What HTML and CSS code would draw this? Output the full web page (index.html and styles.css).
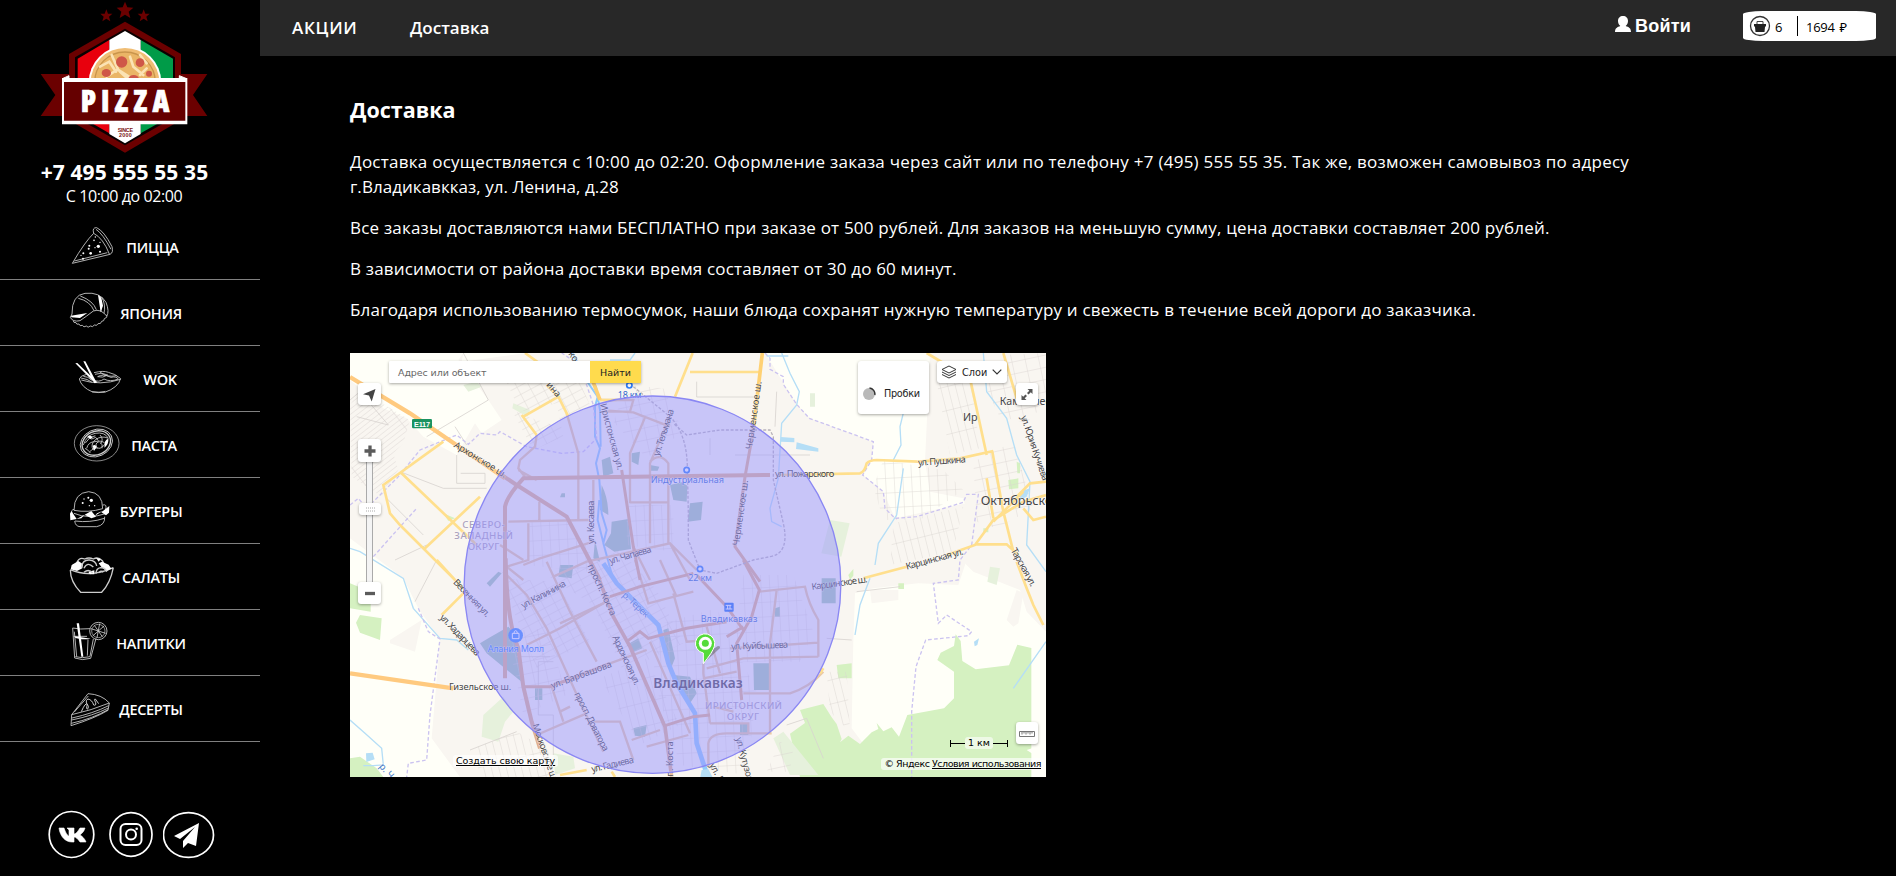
FILE: index.html
```html
<!DOCTYPE html>
<html lang="ru">
<head>
<meta charset="utf-8">
<title>Доставка</title>
<link rel="stylesheet" href="styles.css">
</head>
<body>
<div class="page">
<aside class="sidebar">
  <svg class="logo" viewBox="0 0 780 471">
    <g fill="#6b0000">
      <path d="M375 5l7 17 18 1-14 12 5 19-16-10-16 10 5-19-14-12 18-1z"/>
      <path d="M319 28l5 13 13 0-10 9 4 14-12-8-12 8 4-14-10-9 13 0z"/>
      <path d="M431 28l5 13 13 0-10 9 4 14-12-8-12 8 4-14-10-9 13 0z"/>
      <path d="M122 222H250V348H122L166 285zM622 222H500V348H622L579 285z"/>
      <path d="M375 65L543 162V360L375 458 207 360V162z"/>
    </g>
    <path d="M375 86L525 172V350L375 436 225 350V172z" fill="#0a0000"/>
    <path d="M328 120L233 176V345L328 400z" fill="#e8000d"/>
    <path d="M422 120L519 176V345L422 400z" fill="#009b48"/>
    <path d="M328 120L375 93 422 120V402L375 430 328 402z" fill="#fff"/>
    <circle cx="375" cy="247" r="109" fill="#fff"/>
    <circle cx="375" cy="247" r="103" fill="#f0bd74"/>
    <circle cx="375" cy="247" r="91" fill="#eab566" stroke="#c9954c" stroke-width="4"/>
    <g stroke="#fbe3b4" stroke-width="8" stroke-linecap="round" fill="none"><path d="M300 200l28-15 20 30M335 165l20 45 40 25M390 170l10 30 30 25M320 230l30-20M420 165l20 25M440 205l-20 20M360 215l20 18"/></g>
    <g fill="#cf5748"><circle cx="365" cy="186" r="17"/><circle cx="420" cy="188" r="13"/><ellipse cx="319" cy="219" rx="14" ry="12"/><ellipse cx="401" cy="234" rx="15" ry="9"/><circle cx="447" cy="221" r="9"/></g>
    <path d="M187 236l20-9v9zM560 236l-22-9v9z" fill="#fff" stroke="#fff" stroke-width="3"/>
    <path d="M186 234H562V373H186z" fill="#fff"/><path d="M192 246H556V362H192z" fill="#650000"/>
    <text x="242" y="337" textLength="266" class="logo-name">PIZZA</text>
    <g class="logo-since"><text x="353" y="395" textLength="46">SINCE</text><text x="357" y="412" textLength="38">2000</text></g>
  </svg>
  <div class="phone">+7 495 555 55 35</div>
  <div class="hours">С 10:00 до 02:00</div>
  <nav class="menu">
    <a class="item pizza"><svg class="ico" viewBox="198 -3 153 195"><path d="M217 145Q255 80 281 55Q276 37 290 38Q312 48 336 95Q341 113 330 118L217 145M281 55Q310 70 328 117M223 138L322 113M288 43Q308 56 333 103"/><g class="solid"><circle cx="295" cy="94" r="5"/><circle cx="272" cy="115" r="4"/><circle cx="282" cy="76" r="2.500"/><circle cx="268" cy="92" r="3"/><circle cx="266" cy="101" r="3"/><circle cx="300" cy="82" r="2"/><circle cx="285" cy="98" r="2"/><circle cx="250" cy="115" r="3"/><circle cx="243" cy="121" r="2"/><circle cx="300" cy="110" r="3"/><circle cx="249" cy="131" r="3"/><circle cx="286" cy="66" r="2"/></g></svg><span>ПИЦЦА</span></a>
    <a class="item"><svg class="ico" viewBox="198 195 153 195"><path d="M216 297Q215 240 255 235Q300 230 318 262Q329 290 320 303Q302 280 280 288Q258 305 240 317Q218 322 211 307L216 297M235 250Q270 258 282 287M241 243Q280 258 289 284M296 240Q306 260 303 290M305 246Q318 270 312 295M220 318q0 6 8 5q1 7 9 4q2 8 10 4q4 8 12 2q5 7 12 0q7 5 12-3q8 4 11-4q9 2 11-7q8 0 8-8q10-3 8-10"/><path class="solid" d="M213 302L262 294 240 309 214 307zM294 240l10 8 5 24-7 20z"/></svg><span>ЯПОНИЯ</span></a>
    <a class="item wok"><svg class="ico" viewBox="198 393 153 195"><path d="M238 492Q244 517 278 531L314 532Q355 518 362 490M244 495Q300 513 362 493M276 530Q296 536 316 529M238 492Q240 482 260 478M282 473Q310 466 325 472Q345 476 361 490M285 478q20-8 38 2q-15 10-30 5q15-10 40 2q15-4 22 5q-25 10-43 0q-16 12-34 2M250 484q15 0 25 12M243 489q20 3 32 12M300 472q20 16 50 10"/><path class="solid" d="M226 445l6-1 60 58-7 3zM250 439h6l33 62-6 4z"/></svg><span>WOK</span></a>
    <a class="item pasta"><svg class="ico" viewBox="198 591 153 195"><ellipse cx="290" cy="685" rx="67" ry="53" stroke-width="2"/><ellipse cx="289" cy="684" rx="50" ry="40" transform="rotate(-25 289 684)"/><ellipse cx="289" cy="684" rx="44" ry="35" transform="rotate(-25 289 684)" stroke-width="4"/><path d="M250 690q10-30 35-35q30-5 40 15q-20-10-40 5q-15 15-5 30M260 700q5-20 25-20q20-5 30 5M270 710q10-15 30-10q15-8 20-20M265 668q10 8 20 0M285 665l10 12M292 700q-10-15 5-20M256 684q12-20 30-22M300 660q12 12 2 26M255 700q12 6 16 14M306 700q4-12-6-18"/><path class="solid" d="M315 680q5-10 10-8q2 15-12 26zM262 665q8-8 16 2l-6 5zM278 692q8-6 12 4l-8 12z"/></svg><span>ПАСТА</span></a>
    <a class="item"><svg class="ico" viewBox="198 9 153 195"><path d="M222 106Q222 53 266 50Q308 53 308 101Q264 114 222 106M222 103Q212 105 216 114M308 90q15-4 8 15M222 115Q265 134 320 115M225 138Q270 144 313 130M224 138Q226 154 240 155H290Q316 150 314 125"/><path class="solid" d="M214 108l16 24-19 4-1-20zM254 119l20-11 14 17-14 5zM304 112l24-19-1 20-9 8zM230 132l24-13-10 11zM285 122l24-15-18 8z"/><g class="solid"><circle cx="274" cy="76" r="5"/><circle cx="265" cy="68" r="3"/><circle cx="252" cy="72" r="2"/><circle cx="248" cy="84" r="3"/><circle cx="284" cy="92" r="2"/><circle cx="268" cy="92" r="2"/></g></svg><span>БУРГЕРЫ</span></a>
    <a class="item"><svg class="ico" viewBox="198 207 153 195"><path stroke-width="4" d="M211 285Q211 320 242 352H305Q331 325 340 278M211 284Q270 310 340 278M230 263q8-18 24-11q13-6 26 0q14-8 27 5l4 8"/><path class="solid" d="M212 283l3-13 20-12 14 10-2 12-16 8zM296 265l10-5 20 9 8 12-14 7-14-10zM265 290l18-4v12h-14zM288 248l14 5-6 7z"/><path stroke-width="4" d="M244 278q3-24 24-23q20 2 22 18M252 280q10-22 28-4M288 296q0-16 14-18q14 0 18 12M252 292q14-12 26 2M296 294q6-10 14-2"/></svg><span>САЛАТЫ</span></a>
    <a class="item"><svg class="ico" viewBox="198 405 153 195"><path d="M218 459L224 549Q247 558 272 550L288 490M218 459Q240 464 270 461M223 470L230 545M221 484h40M264 494l-2 48M280 492l-10 52M226 545q20 6 44 0"/><circle cx="295" cy="468" r="26"/><circle cx="295" cy="468" r="20" stroke-width="2"/><path d="M273 461l44 14M299 446l-8 42M278 483l34-30M283 451l24 34"/><path class="solid" d="M230 445h7l13 100h-6zM224 484q25 4 48 7-22 4-46-2z"/></svg><span>НАПИТКИ</span></a>
    <a class="item"><svg class="ico" viewBox="198 603 153 195"><path d="M215 719L264 656Q305 658 328 684Q275 706 215 719L213 752Q284 730 324 706L328 684M216 729Q280 715 326 692M215 735Q280 722 325 699M214 745Q280 730 324 704M223 711L265 663"/><path stroke-width="3" d="M244 710q12-28 18-23q-5 20 2 14q5-6-5-17q-2-10 5-12q12 2 17 18q8 3 6-7q-6-12-1-11l10 14"/></svg><span>ДЕСЕРТЫ</span></a>
  </nav>
  <div class="social">
    <svg width="48" height="49" viewBox="0 0 48 49"><ellipse cx="23.500" cy="24.500" rx="22.300" ry="23" class="ring"/><path fill="#fff" d="M11 18h5c2 6 4 8 5 8v-6l-2-2h7v6c2 0 4-3 6-6h5c-1 4-4 6-5 7 2 1 5 4 6 7h-6c-2-3-4-5-6-5v5h-2c-7 0-12-6-13-14z" stroke="#fff" stroke-width=".6"/></svg>
    <svg width="46" height="47" viewBox="0 0 46 47"><ellipse cx="23" cy="23.500" rx="21" ry="21.800" class="ring"/><rect x="12.500" y="13" width="21" height="21" rx="5" class="thick"/><circle cx="23" cy="23.500" r="5" class="thick"/><circle cx="28.700" cy="17.800" r="1.300" fill="#fff"/></svg>
    <svg width="52" height="48" viewBox="0 0 52 48"><ellipse cx="25.500" cy="24" rx="25" ry="22.300" class="ring"/><path fill="#fff" d="M36 12L11 25l6 3 15-12-12 14v7l5-5 8 3z"/></svg>
  </div>
</aside>
<div class="main">
  <header class="top">
    <a class="nav-a">АКЦИИ</a><a class="nav-b">Доставка</a>
    <a class="login"><svg width="16" height="16" viewBox="0 0 16 16"><path fill="#fff" d="M8 0c3 0 5 2 5 5 0 2-1 4-2.300 5 3 1 5.300 2 5.300 6H0c0-4 2.500-5 5.300-6C4 9 3 7 3 5c0-3 2-5 5-5z"/></svg><span>Войти</span></a>
    <div class="cart"><svg width="22" height="22" viewBox="0 0 22 22"><circle cx="11" cy="11" r="9.500" fill="#fff" stroke="#333" stroke-width="1.300"/><path d="M8 9V6.500h6V9" fill="none" stroke="#444"/><path d="M5 9h12v2l-1 1-.5 5h-9L6 12l-1-1z" fill="#222"/></svg><span class="count">6</span><span class="sum">1694 ₽</span></div>
  </header>
  <main class="content">
    <h1>Доставка</h1>
    <p class="p1">Доставка осуществляется с 10:00 до 02:20. Оформление заказа через сайт или по телефону +7 (495) 555 55 35. Так же, возможен самовывоз по адресу<br><span class="p1b">г.Владикавкказ, ул. Ленина, д.28</span></p>
    <p class="p2">Все заказы доставляются нами БЕСПЛАТНО при заказе от 500 рублей. Для заказов на меньшую сумму, цена доставки составляет 200 рублей.</p>
    <p class="p3">В зависимости от района доставки время составляет от 30 до 60 минут.</p>
    <p class="p4">Благодаря использованию термосумок, наши блюда сохранят нужную температуру и свежесть в течение всей дороги до заказчика.</p>
    <div class="map">
      <svg class="tiles" width="696" height="424" viewBox="30 24 2088 1272">
        <defs>
          <pattern id="g1" width="34" height="24" patternUnits="userSpaceOnUse" patternTransform="rotate(-28)"><path d="M0 0H34M0 0V24" class="lane"/></pattern>
          <pattern id="g2" width="22" height="70" patternUnits="userSpaceOnUse" patternTransform="rotate(-14)"><path d="M0 0H22M0 0V70" class="lane"/></pattern>
          <pattern id="g3" width="26" height="44" patternUnits="userSpaceOnUse" patternTransform="rotate(-3)"><path d="M0 0H26M0 0V44" class="lane"/></pattern>
          <pattern id="g4" width="200" height="13" patternUnits="userSpaceOnUse" patternTransform="rotate(-38)"><path d="M0 0H200M0 0V13" class="lane"/></pattern>
          <pattern id="g5" width="40" height="36" patternUnits="userSpaceOnUse" patternTransform="rotate(-12)"><path d="M0 0H40M0 0V36" class="lane"/></pattern>
        </defs>
        <rect x="30" y="24" width="2088" height="1272" fill="#fffff8"/>
        <path fill="#f9f6f1" d="M30 105L130 190 200 220 250 275 350 330 445 165 355 45 370 24H1275L1370 178 1410 220 1600 290 1595 345 1570 390 1630 440 1665 520 1900 470 1895 600 1855 720 1735 715 1600 730 1545 745 1540 885 1535 1150 1580 1210 1400 1296H360L275 1180 300 885 235 790 190 700 30 580z"/>
        <path fill="#f9f6f1" d="M1770 24H2118V860L2060 800 2040 735 1900 680 1870 650 1895 560 1870 460 1770 440 1755 350z"/>
        <path fill="#f9f6f1" d="M150 885l95-60-20 95-75-25zM1590 735h85v30l-80 10zM2030 735l20 10-15 90-15 10-20-20z"/>
        <path fill="#fffff8" d="M365 50L560 24H370zM390 150l55 15 40 60-60 40-20-30z"/>
        <g fill="#d5f1c1"><path d="M30 715l62 25v60l-62-10zM60 810l65 10-5 65-60-22-12-30zM30 1240l30-5 50 35 20 26H30z"/><path d="M1380 1095l70-18 25 40 15 20 15 45-5 10 25-20 35 25 35-35 20-10-5-18 20 25 25-12 22 28 25-65 110-20 30-30V980l-50-35 10-22 40-20 5-35 15 20 5 60 40 25 100-12 25-62 42 10V1296H1380l-30-130 45-32z"/><path d="M1490 960l45-5v45l-40 0zM1675 715h17v17h-17zM2005 405l30-5v30l-28 3zM1930 550h15v12h-15zM310 505l35 15-20 8zM2030 350l10 5v30l-8 0zM1525 690l15-18v20l-10 12z"/></g>
        <path fill="#fffff8" d="M2060 1215l30-10 28-25v55l-35-5z"/>
        <path fill="#e6f1dc" d="M1470 525l59 10-25 100-60-10zM430 1110l60-55 30 45-25 30-20 60-50-15zM1300 1180l30-20 105 130H1350zM640 1225l60 10 5 35-60 20zM1950 665l30 5-10 50-28-10zM520 175l50 20-8 20-45-25zM370 120l40-10 15 15-40 15zM1410 145h15v40h-15z"/>
        <g fill="#a5c8b6"><path d="M445 880l60-35 20 20 25 150-110-90-20-30zM660 660h40l-5 40-40-5zM440 715l35-35 10 5-35 40zM860 900l35-20 12 30-25 10zM880 1150l40-10-5 35-30-3zM1240 955l50-0v80h-48zM1445 700h42v75h-42zM1305 790l15-5v30h-15zM1200 1135h25v35h-25zM585 1030h22v35h-22z"/></g>
        <g fill="#a5c8b6" transform="translate(390 105)"><path d="M395 240l25-10 10 50-30 10zM395 315q20 40 20 90l-25-15zM485 220l25-5-5 40-20-10zM540 255l28 5-5 12h-25zM600 315l35-8 17 10-2 48-40-5zM660 370l38-5-5 55-40 5zM425 425l50-8 8 90-50 8-30-20 20-35zM375 480l15 65-20-10zM275 340h10v12h-15z"/></g>
        <g fill="#a5c8b6" transform="translate(660 645)"><path d="M310 210l15-5 20 90-12 30-15-40zM340 345l50 5 20 50-20 30-45-60zM220 320"/></g>
        <path d="M345 245L380 300M370 24L445 165 260 275M30 165L60 140 145 240 50 215" class="lane"/>
        <path fill="url(#g4)" d="M30 180l30-45 150 90-20 70-30 30 15 50-50 80-90-60z"/>
        <path fill="url(#g1)" d="M485 80L700 65 750 180 640 240 545 210zM520 205l60 110 90-40-20-100zM620 690l110-20 110-55 110 120 80 160-180 85-90-200zM490 700l160 10 100 180-160 80-80-200z"/>
        <path fill="url(#g3)" d="M570 530l120 0 60 90-10 60-180-20zM860 480l140 0 0 140-140-20zM1210 690h150l60 170-40 90h-240l50-110zM950 840l180-50 120 250-30 250-200-30-80-260zM1630 345l180 30 60 60-130 90-110 0-30-100z"/>
        <path fill="url(#g2)" d="M1660 535l210-50-30 135-190 40zM780 1000l140-60 100 200-120 60zM1790 110l100-20 30 220-90 20zM1460 980l60 0 10 180-60-60zM400 1210l130-50 90 50 40 86H420z"/>
        <path fill="url(#g5)" d="M1900 350l120-60 60 200-110 60-60-20zM1930 110l60-80 128-6v150l-60 60-80-20zM500 860l120-10 60 200-130 60zM860 120l110 10 60 130-110 80-100-110zM1320 1190l40 20-10 70-70 0z"/>
        <path d="M350 330V415H435V385H362M225 770L290 645M180 380L310 430H440M140 460L250 570M165 645L260 600M1070 110V156H1250M1185 330H1410M1310 140L1305 245M1110 280V330M1550 740L1680 725M1535 885L1460 880M390 1215L530 1160M1340 1140L1400 1120 1450 1240M640 1230V1110H595V950H640M530 935H630" class="lane"/>
        <g fill="none" stroke="#b5def6"><path d="M1325 24L1350 85 1378 140 1370 180 1325 235 1315 400 1290 490 1295 530 1325 545M1696 107V180L1680 245 1683 300 1660 345M1690 370L1670 510 1615 595 1605 660M1590 700L1560 780 1545 870M30 610L60 620 190 700 220 790 300 880 350 885 385 915M30 1125L75 1165 125 1210 130 1260 100 1262H70M1930 24L1940 140 2000 220 2030 330 2070 410 2060 600 2118 680M2118 890L2020 1030M810 45H870L885 24M1280 33H1345" stroke-width="4"/></g>
        <g fill="none" stroke="#8fc9fb"><path stroke-width="6" transform="translate(390 105)" d="M305-85L355 10 383 50 375 80V170L390 205 378 250 388 300 395 400 410 450 400 490 430 600M345-20L378 20 390 90 392 200M388 360l-5 60 20 80"/><path stroke-width="14" transform="translate(660 645)" d="M130 10L170 70 240 140 295 195 325 310 350 370 405 460 410 550 440 640"/></g>
        <path fill="#b5def6" d="M1323 276l40 3v13l-40-2zM1370 292l65 18v10l-67-8zM78 1225l20-2 6 20-25 8zM1902 890l15-10-5 20-8 4zM2040 440l30-10-10 25-20 10zM1085 1275l20-3 15 29h-40z"/>
        <g fill="none" stroke="#cbc3f0" stroke-width="4" stroke-dasharray="11 7"><path d="M30 480L55 460 80 490 175 395 240 315 350 270 385 298 420 265 470 270 480 260 560 305 665 325 730 320 770 280 760 180 720 60 665 24M1275 24L1290 40V73L1330 95V118L1370 178 1408 220 1600 290 1595 345 1568 390 1630 440 1635 490 1665 520 1730 515 1870 472 1880 448H1915L1895 600 1860 645 1855 705 1780 715 1795 835 1820 810 1895 860 1885 872 1757 885 1728 965 1715 1100V1296M100 635L185 540 230 490M235 790L265 860 300 882 270 1110 260 1245 205 1255 200 1296"/></g>
        <g fill="none" stroke="#e9c9a6" stroke-width="7">
          <path d="M490 680L560 750 620 850 720 1070 790 1220M620 650L690 800 770 950M550 645L480 600M550 660L600 640 760 590M560 900L660 850 790 775M590 1170L740 1105M635 1025L670 1130"/>
          <path transform="translate(390 105)" d="M390 60H490L480 95H400M415 92L490 97 600 140M600 110L540 250V490M525 112L480 220V370M540 245Q570 215 595 250V490M480 367H595M290 100L325 220V420M200 165L195 200 150 240 145 265 165 290M115 425L355 420M208 365V420M175 430V540L110 560M370 300V410M250 590L350 545 600 490 680 570M490 500L540 600M600 490L660 600M145 270L200 300M110 560L160 600"/>
          <path transform="translate(660 645)" d="M0 190L130 130 150 110M225 0L265 130 400 95M340 100L380 245 450 240M150 310L260 270M650 90L630 250V520M598 95L735 80Q745 130 775 180V290M510 265L775 248M440 325L550 295 775 290M430 310V340L445 450 450 490M440 200L480 340M550 400H690Q750 380 790 335M450 490H565V520M445 620V550Q450 520 500 520H635M100 485L180 485 220 600M215 540L300 510M385 525L260 560M270 245L390 520M430 355L530 335M460 440L520 455M0 370L150 310M30 440L0 455M300 0L350 110"/>
        </g>
        <g fill="none" stroke="#e1b08e">
          <path stroke-width="12" d="M495 1000V485Q500 455 550 400L1290 390M470 380L530 420 680 515 780 705M497 640Q500 830 535 910L550 1025 575 1130 600 1210"/>
          <path stroke-width="11" transform="translate(660 645)" d="M118 60L160 170 210 260 315 500 335 650"/>
          <path stroke-width="9" transform="translate(660 645)" d="M150 110L240 80 400 40M410 45L500 140 550 210M550 0L598 90 575 170 530 250 545 420M200 245L240 215 265 235 380 205 500 185M500 230L550 200M315 497L400 470 450 465"/>
          <path stroke-width="9" d="M845 375L880 605 900 705M550 1025H630L810 955M1240 255L1215 395 1185 605 1260 710"/>
        </g>
        <g fill="none" stroke="#ffdf8d" stroke-width="8"><path d="M310 290L130 420 150 505 180 540 380 740M180 380L410 600M255 610L420 455M290 645L345 705M370 745L305 810M550 215L655 155 620 120M545 210L590 270M655 155L685 215M555 24L640 85M780 165H830M1005 155L1058 24M1050 81L1260 81M30 1296M1320 390L1560 385Q1575 380 1580 355Q1590 345 1610 345L1735 350 1860 340 1960 318M1570 700L1700 665M1820 630L1905 600 1960 525 2050 470 2118 450M2050 440L1960 530M2118 410L2070 415 2030 455M2050 490L2080 525 2118 515M1905 598H2000L2035 630M1957 320L1990 500 2020 620M1960 520L1940 400M1760 24L1820 60M1890 100L1940 330M1990 24L2030 160M660 1290L740 1275M2030 650L2060 730 2080 780 2110 840M1440 985L1450 970M815 1280L825 1296"/><path d="M740 60L780 165M1267 24L1240 255" stroke="#ffd173" stroke-width="11"/></g>
        <path d="M30 96L210 205 495 400M30 985L340 1030" fill="none" stroke="#ffca7f" stroke-width="13"/>
        <path transform="translate(390 105)" d="M490 20L600 110Q650 160 652 260L655 400 655 480 690 570 740 580 850 540 900 530Q960 520 940 430L910 300V170L900 150H750L650 165 610 130" fill="none" stroke="#b8b3ba" stroke-width="4" stroke-dasharray="9 5"/>
        <g class="labels">
          <text transform="translate(340 305) rotate(31.500)" textLength="180">Архонское ш.</text>
          <text transform="translate(780 178) rotate(75)" textLength="205">Иристонская ул.</text>
          <text transform="translate(957 335) rotate(-72)" textLength="146">ул. Тельмана</text>
          <text transform="translate(762 597) rotate(-90)" textLength="130">ул. Кесаева</text>
          <text transform="translate(811 657) rotate(-16)" textLength="130">ул. Чапаева</text>
          <text transform="translate(618 120) rotate(50)">ина</text><text transform="translate(684 27) rotate(55)">ко</text>
          <text transform="translate(1236 314) rotate(-82)" textLength="206">Черменское ш.</text>
          <text transform="translate(1197 603) rotate(-82)" textLength="198">Черменское ш.</text>
          <text x="1305" y="397" textLength="178">ул. Пожарского</text>
          <text transform="translate(1735 362) rotate(-4)" textLength="143">ул. Пушкина</text>
          <text x="1869" y="228" class="village">Ир</text>
          <text x="1979" y="180" class="village">Камбилеевское</text>
          <text transform="translate(2042 215) rotate(71)" textLength="205">ул. Юрия Кучиева</text>
          <text x="1922" y="481" class="town">Октябрьское</text>
          <text transform="translate(1700 674) rotate(-15)" textLength="178">Карцинская ул.</text>
          <text transform="translate(2012 616) rotate(61)" textLength="126">Тарская ул.</text>
          <g transform="translate(0 645)">
            <text transform="translate(338 68) rotate(46)" textLength="145">Весенняя ул.</text>
            <text transform="translate(550 146) rotate(-28)" textLength="147">ул. Калинина</text>
            <text transform="translate(298 174) rotate(46)" textLength="160">ул. Хадарцева</text>
            <text x="327" y="391" textLength="187">Гизельское ш.</text>
            <text transform="translate(637 386) rotate(-20)" textLength="192">ул. Барбашова</text>
            <text transform="translate(742 17) rotate(65)" textLength="168">просп. Коста</text>
            <text transform="translate(817 232) rotate(65)" textLength="160">Ардонская ул.</text>
            <text transform="translate(845 107) rotate(43)" textLength="98" fill="#3f79c6">р. Терек</text>
            <text transform="translate(702 402) rotate(63)" textLength="195">просп. Доватора</text>
            <text transform="translate(577 495) rotate(71)" textLength="180">Московское ш.</text>
            <text transform="translate(757 637) rotate(-13)" textLength="129">ул. Гадиева</text>
            <text transform="translate(1000 650) rotate(-90)" textLength="106">п. Коста</text>
            <text transform="translate(116 620) rotate(48)" fill="#3f79c6">р. Ч</text>
          </g>
          <g transform="translate(1050 645)">
            <text transform="translate(124 269) rotate(-2)" textLength="171">ул. Куйбышева</text>
            <text transform="translate(366 90) rotate(-8)" textLength="169">Карцинское ш.</text>
            <text transform="translate(137 535) rotate(75)" textLength="150">ул. Кутузова</text>
            <text transform="translate(58 615) rotate(62)">ул. Бо</text>
          </g>
          <g class="district"><text x="367" y="549" textLength="127">СЕВЕРО-</text><text x="343" y="581" textLength="176">ЗАПАДНЫЙ</text><text x="383" y="614" textLength="95">ОКРУГ</text><text x="1095" y="1092" textLength="231">ИРИСТОНСКИЙ</text><text x="1160" y="1125" textLength="97">ОКРУГ</text></g>
          <g class="metro"><text x="833" y="160" textLength="71">18 км</text><text x="932" y="413" textLength="220">Индустриальная</text><text x="1045" y="707" textLength="71">22 км</text><text x="1082" y="831" textLength="170">Владикавказ</text><text x="443" y="921" textLength="169" fill="#2a7bff">Алания Молл</text></g>
          <text x="940" y="1028" textLength="268" class="city">Владикавказ</text>
        </g>
        <g fill="#fff" stroke="#2e7cf6" stroke-width="5"><circle cx="868" cy="121" r="8"/><circle cx="1040" cy="375" r="8"/><circle cx="1080" cy="672" r="8"/></g>
        <circle cx="527" cy="871" r="22" fill="#3c8bff"/><path d="M517 865h20v16h-20zM522 865q0-8 5-8t5 8" fill="none" stroke="#fff" stroke-width="3"/>
        <rect x="1153" y="773" width="28" height="27" rx="3" fill="#1e6df0"/><path d="M1157 781h17M1157 792h20M1163 781v11M1170 781v11" stroke="#fff" stroke-width="3"/>
        <ellipse cx="937.500" cy="719" rx="565" ry="566" fill="#9793ff" fill-opacity=".5" stroke="#8a87f3" stroke-width="4"/>
        <path d="M1092 953l46-42q6-8-4-8l-24 14z" fill="#555" opacity=".45"/>
        <path d="M1090 956V924A29 29 0 1 1 1123 904Q1118 922 1090 956z" fill="#55db3a" stroke="#fff" stroke-width="3"/><circle cx="1096" cy="895" r="19.500" fill="#fff"/><circle cx="1096" cy="895" r="10.500" fill="#55db3a"/>
        <rect x="216" y="222" width="60" height="28" rx="4" fill="#1a9360"/><text x="222" y="245" class="shield" textLength="48">E117</text>
      </svg>
      <div class="search ctl"><span>Адрес или объект</span><b>Найти</b></div>
      <div class="ctl geo"><svg width="23" height="22" viewBox="0 0 23 22"><path d="M17.500 6L5 11.300l6 1.200 2.700 6z" fill="#444"/></svg></div>
      <div class="rail"></div>
      <div class="ctl plus"><svg width="23" height="23" viewBox="0 0 23 23"><path d="M12 6.500v11M6.500 12h11" stroke="#5b5b5b" stroke-width="3.300"/></svg></div>
      <div class="ctl thumb"><svg width="22" height="12" viewBox="0 0 22 12"><path d="M7 5h9M7 8h9" stroke="#aaa" stroke-dasharray="1 1"/></svg></div>
      <div class="ctl minus"><svg width="23" height="22" viewBox="0 0 23 22"><path d="M7 11.500h10" stroke="#5b5b5b" stroke-width="3.300"/></svg></div>
      <div class="ctl traffic"><svg width="14" height="14" viewBox="0 0 14 14"><circle cx="7" cy="7" r="6" fill="#b9b9b9"/><path d="M7.500 1A6 6 0 0 1 12.800 8" fill="none" stroke="#333" stroke-width="1.500"/></svg><span>Пробки</span></div>
      <div class="ctl layers"><svg width="16" height="14" viewBox="0 0 16 14"><path d="M1 4.500L8 1l7 3.500L8 8zM1 7l7 3.500L15 7M1 9.500L8 13l7-3.500" fill="none" stroke="#333"/></svg><span>Слои</span><svg width="10" height="6" viewBox="0 0 10 6"><path d="M.7.700L5 5 9.300.700" fill="none" stroke="#333" stroke-width="1.200"/></svg></div>
      <div class="ctl full"><svg width="22" height="22" viewBox="0 0 22 22"><path d="M16.500 6v5l-1.700-1.700-2.300 2.200-1.500-1.500 2.300-2.300L11.500 6zM5.500 17v-5l1.700 1.700 2.300-2.200L11 13l-2.300 2.300 1.800 1.700z" fill="#555"/></svg></div>
      <div class="ctl ruler"><svg width="22" height="22" viewBox="0 0 22 22"><path d="M3.500 9.500h15v5h-15zM6 10v2.500M8 10v1.500M10 10v2.500M12 10v1.500M14 10v2.500M16 10v1.500" fill="none" stroke="#777"/></svg></div>
      <div class="scale"><i></i><span>1 км</span><i class="r"></i></div>
      <div class="copy create"><u>Создать свою карту</u></div>
      <div class="copy terms">© Яндекс <u>Условия использования</u></div>
    </div>
  </main>
</div>
</div>
</body>
</html>
```
FILE: styles.css
```css
* { box-sizing: border-box; }
body { margin: 0; background: #000; color: #fff; font-family: "Open Sans", "Noto Sans", sans-serif; }
.page { display: flex; height: 876px; overflow: hidden; }
.sidebar { width: 260px; flex: none; display: flex; flex-direction: column; }
.logo { width: 260px; height: 157px; display: block; flex: none; }
.logo-name { font: 800 88px "Open Sans", sans-serif; font-stretch: condensed; fill: #fff; stroke: #fff; stroke-width: 2px; }
.logo-since { font: 700 16px "Liberation Sans", sans-serif; fill: #7a1010; }
.phone { height: 31px; line-height: 31px; text-align: center; font-weight: 700; font-size: 21px; letter-spacing: .1px; padding-right: 11px; white-space: nowrap; }
.hours { height: 26px; line-height: 17px; text-align: center; font-size: 16px; padding-right: 12px; letter-spacing: -.4px; white-space: nowrap; }
.menu { display: flex; flex-direction: column; flex: none; }
.item { height: 66px; border-bottom: 1px solid #808080; display: flex; padding-left: 66px; }
.item span { width: 68px; display: flex; justify-content: center; line-height: 68px; font-weight: 600; font-size: 14.500px; letter-spacing: -.3px; white-space: nowrap; }
.pizza span { margin-left: 1.500px; }
.wok span { margin-left: 9px; }
.pasta span { margin-left: 3px; }
.ico { width: 51px; height: 65px; overflow: visible; flex: none; fill: none; stroke: #ccc; stroke-width: 2.600; stroke-linejoin: round; }
.ico .solid { fill: #fff; stroke: none; }
.social { display: flex; align-items: center; padding: 68px 0 0 48px; }
.social svg:nth-child(2) { margin-left: 12px; }
.social svg:nth-child(3) { margin-left: 9px; }
.ring { fill: none; stroke: #fff; stroke-width: 1.700; }
.thick { fill: none; stroke: #fff; stroke-width: 2; }
.main { flex: 1; }
.top { height: 56px; background: #282828; display: flex; padding: 0 20px 0 32px; align-items: flex-start; }
.nav-a, .nav-b { font-weight: 600; font-size: 17px; line-height: 55px; white-space: nowrap; }
.nav-a { width: 118px; letter-spacing: .7px; }
.login { margin-left: auto; width: 128px; display: flex; gap: 4px; padding-top: 16px; font: 700 18px/20px "Liberation Sans", sans-serif; letter-spacing: .2px; }
.cart { width: 133px; height: 30px; margin-top: 11px; background: #fff; color: #000; border-radius: 20px / 3px; display: flex; font-size: 13px; line-height: 33px; padding-left: 6px; }
.cart svg { margin-top: 4px; }
.count { width: 22px; margin-left: 4px; }
.sum { border-left: 1px solid #000; height: 20px; margin-top: 5px; padding-left: 8px; line-height: 23px; letter-spacing: -.3px; word-spacing: 2px; white-space: nowrap; }
.content { padding: 38px 0 0 90px; }
h1 { margin: 0; font-size: 21.500px; line-height: 31px; font-weight: 700; height: 55px; }
p { margin: 0 0 16px; font-size: 17px; line-height: 25px; white-space: nowrap; }
.p1 { letter-spacing: .257px; }
.p1b { letter-spacing: .04px; }
.p2 { letter-spacing: .203px; }
.p3 { letter-spacing: .175px; }
.p4 { letter-spacing: .19px; }
.map { position: relative; width: 696px; height: 424px; margin-top: 31px; overflow: hidden; color: #222; }
.tiles { display: block; }
.lane { fill: none; stroke: #d9d4d0; stroke-width: 2.500; }
.labels { font: 28px "Noto Sans", sans-serif; fill: #454545; stroke: #fff; stroke-opacity: .55; stroke-width: 3px; paint-order: stroke; }
.village { font-size: 32px; }
.town { font-size: 38px; }
.district { fill: #aaa1bc; font-size: 29px; font-weight: 500; }
.metro { fill: #3068cc; font-size: 27px; }
.city { font-size: 41px; font-weight: 600; fill: #47424f; }
.shield { font: 700 22px "Liberation Sans", sans-serif; fill: #fff; }
.ctl { position: absolute; background: #fff; border-radius: 3px; box-shadow: 0 1px 3px rgba(0,0,0,.35); font: 9.700px "DejaVu Sans", sans-serif; }
.ctl > svg { display: block; }
.search { left: 39px; top: 8px; width: 252px; height: 22px; display: flex; line-height: 23px; border-radius: 1px; }
.search span { flex: 1; padding-left: 9px; color: #666; font-size: 9.500px; letter-spacing: -.1px; }
.search b { width: 51px; background: #ffdb4d; text-align: center; font-weight: 400; font-size: 9.500px; }
.geo { left: 8px; top: 30px; width: 23px; height: 22px; }
.rail { position: absolute; left: 16px; top: 108px; width: 7px; height: 125px; border: 1px solid #aaa; background: #f4f4f4; }
.plus { left: 8px; top: 86px; width: 23px; height: 23px; }
.thumb { left: 9px; top: 150px; width: 22px; height: 12px; }
.minus { left: 8px; top: 229px; width: 23px; height: 22px; }
.traffic { left: 508px; top: 8px; width: 71px; height: 53px; display: flex; align-items: center; padding: 12px 0 0 4px; gap: 8px; letter-spacing: -.3px; }
.layers { left: 587px; top: 8px; width: 70px; height: 22px; display: flex; align-items: center; padding-left: 4px; gap: 5px; }
.full { left: 666px; top: 30px; width: 22px; height: 22px; }
.ruler { left: 666px; top: 369px; width: 22px; height: 22px; }
.scale { position: absolute; left: 600px; top: 384px; display: flex; align-items: center; font: 9.500px/12px "DejaVu Sans", sans-serif; color: #000; }
.scale i { width: 15px; height: 7px; border-left: 1px solid #000; background: linear-gradient(#000,#000) 0 3px / 100% 1px no-repeat; }
.scale .r { border-left: 0; border-right: 1px solid #000; }
.scale span { width: 28px; text-align: center; background: rgba(255,255,255,.6); border-radius: 3px; }
.copy { position: absolute; background: rgba(255,255,255,.65); border-radius: 3px; font: 9.500px/12px "DejaVu Sans", sans-serif; color: #000; white-space: nowrap; }
.create { left: 103px; top: 402px; padding: 0 3px; letter-spacing: -.07px; }
.terms { right: 2px; top: 405px; padding: 0 3px; letter-spacing: -.47px; }
```
